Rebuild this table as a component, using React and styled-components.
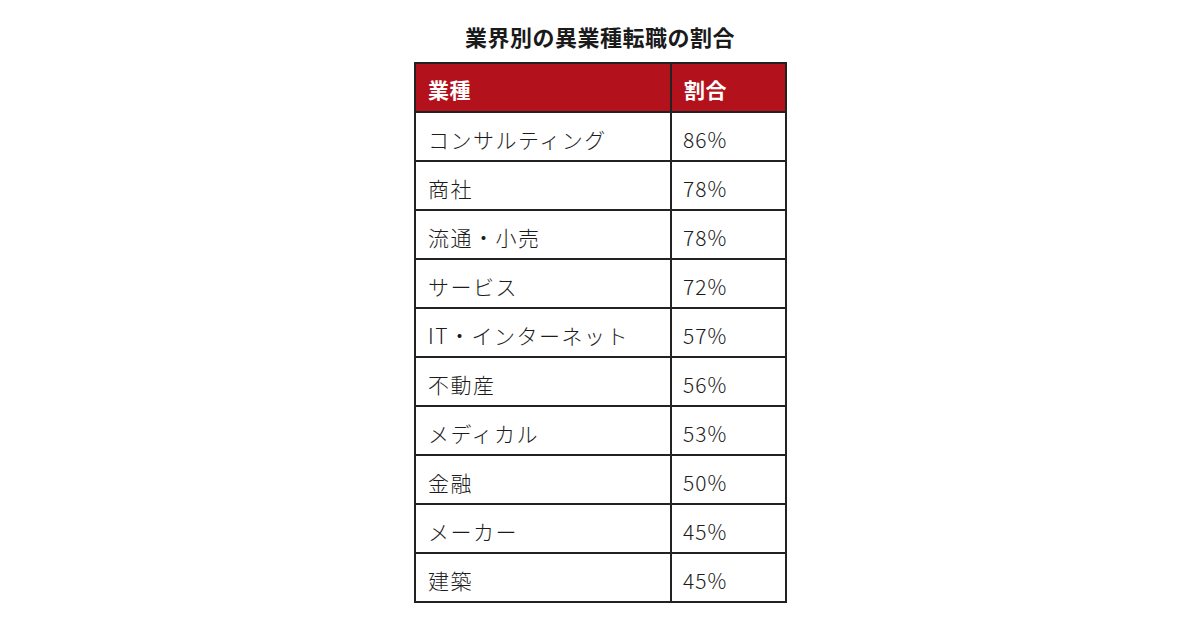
import React from "react";
import styled, { createGlobalStyle } from "styled-components";

const rows = [
  ["コンサルティング", "86%"],
  ["商社", "78%"],
  ["流通・小売", "78%"],
  ["サービス", "72%"],
  ["IT・インターネット", "57%"],
  ["不動産", "56%"],
  ["メディカル", "53%"],
  ["金融", "50%"],
  ["メーカー", "45%"],
  ["建築", "45%"],
];

export default function App() {
  return (
    <>
      <GlobalStyle />
      <Page>
        <Title>業界別の異業種転職の割合</Title>
        <Table>
          <HeadCell>業種</HeadCell>
          <HeadCell $last>割合</HeadCell>
          {rows.map(([name, rate]) => (
            <React.Fragment key={name}>
              <Cell>{name}</Cell>
              <Cell $last>{rate}</Cell>
            </React.Fragment>
          ))}
        </Table>
      </Page>
    </>
  );
}

const GlobalStyle = createGlobalStyle`
  html, body {
    margin: 0;
    background: #ffffff;
  }
  body {
    font-family: "Noto Sans CJK JP", "Noto Sans", sans-serif;
    color: #1c1c1c;
  }
`;

const Page = styled.div`
  width: 1200px;
  height: 630px;
  display: flex;
  flex-direction: column;
  align-items: center;
  padding-top: 20px;
  box-sizing: border-box;
`;

const Title = styled.h1`
  margin: 0 0 10px;
  font-size: 22px;
  line-height: 32px;
  font-weight: 700;
  color: #1a1a1a;
  letter-spacing: 0.5px;
`;

const Table = styled.div`
  display: grid;
  grid-template-columns: 256px 115px;
  grid-auto-rows: 49px;
  border: 2px solid #222222;
  border-bottom: none;
  border-right: none;
  margin-left: 1px;
`;

const HeadCell = styled.div`
  display: flex;
  align-items: center;
  padding: 2px 0 0 12px;
  background: #b3121c;
  color: #ffffff;
  font-size: 21px;
  font-weight: 700;
  letter-spacing: 0.5px;
  border-right: 2px solid #222222;
  border-bottom: 2px solid #222222;
  box-sizing: border-box;
`;

const Cell = styled.div`
  display: flex;
  align-items: center;
  padding: 4px 0 0 ${(p) => (p.$last ? "11px" : "12px")};
  font-size: 21px;
  font-weight: 300;
  letter-spacing: ${(p) => (p.$last ? "1px" : "1.5px")};
  color: #1c1c1c;
  border-right: 2px solid #222222;
  border-bottom: 2px solid #222222;
  box-sizing: border-box;
`;
